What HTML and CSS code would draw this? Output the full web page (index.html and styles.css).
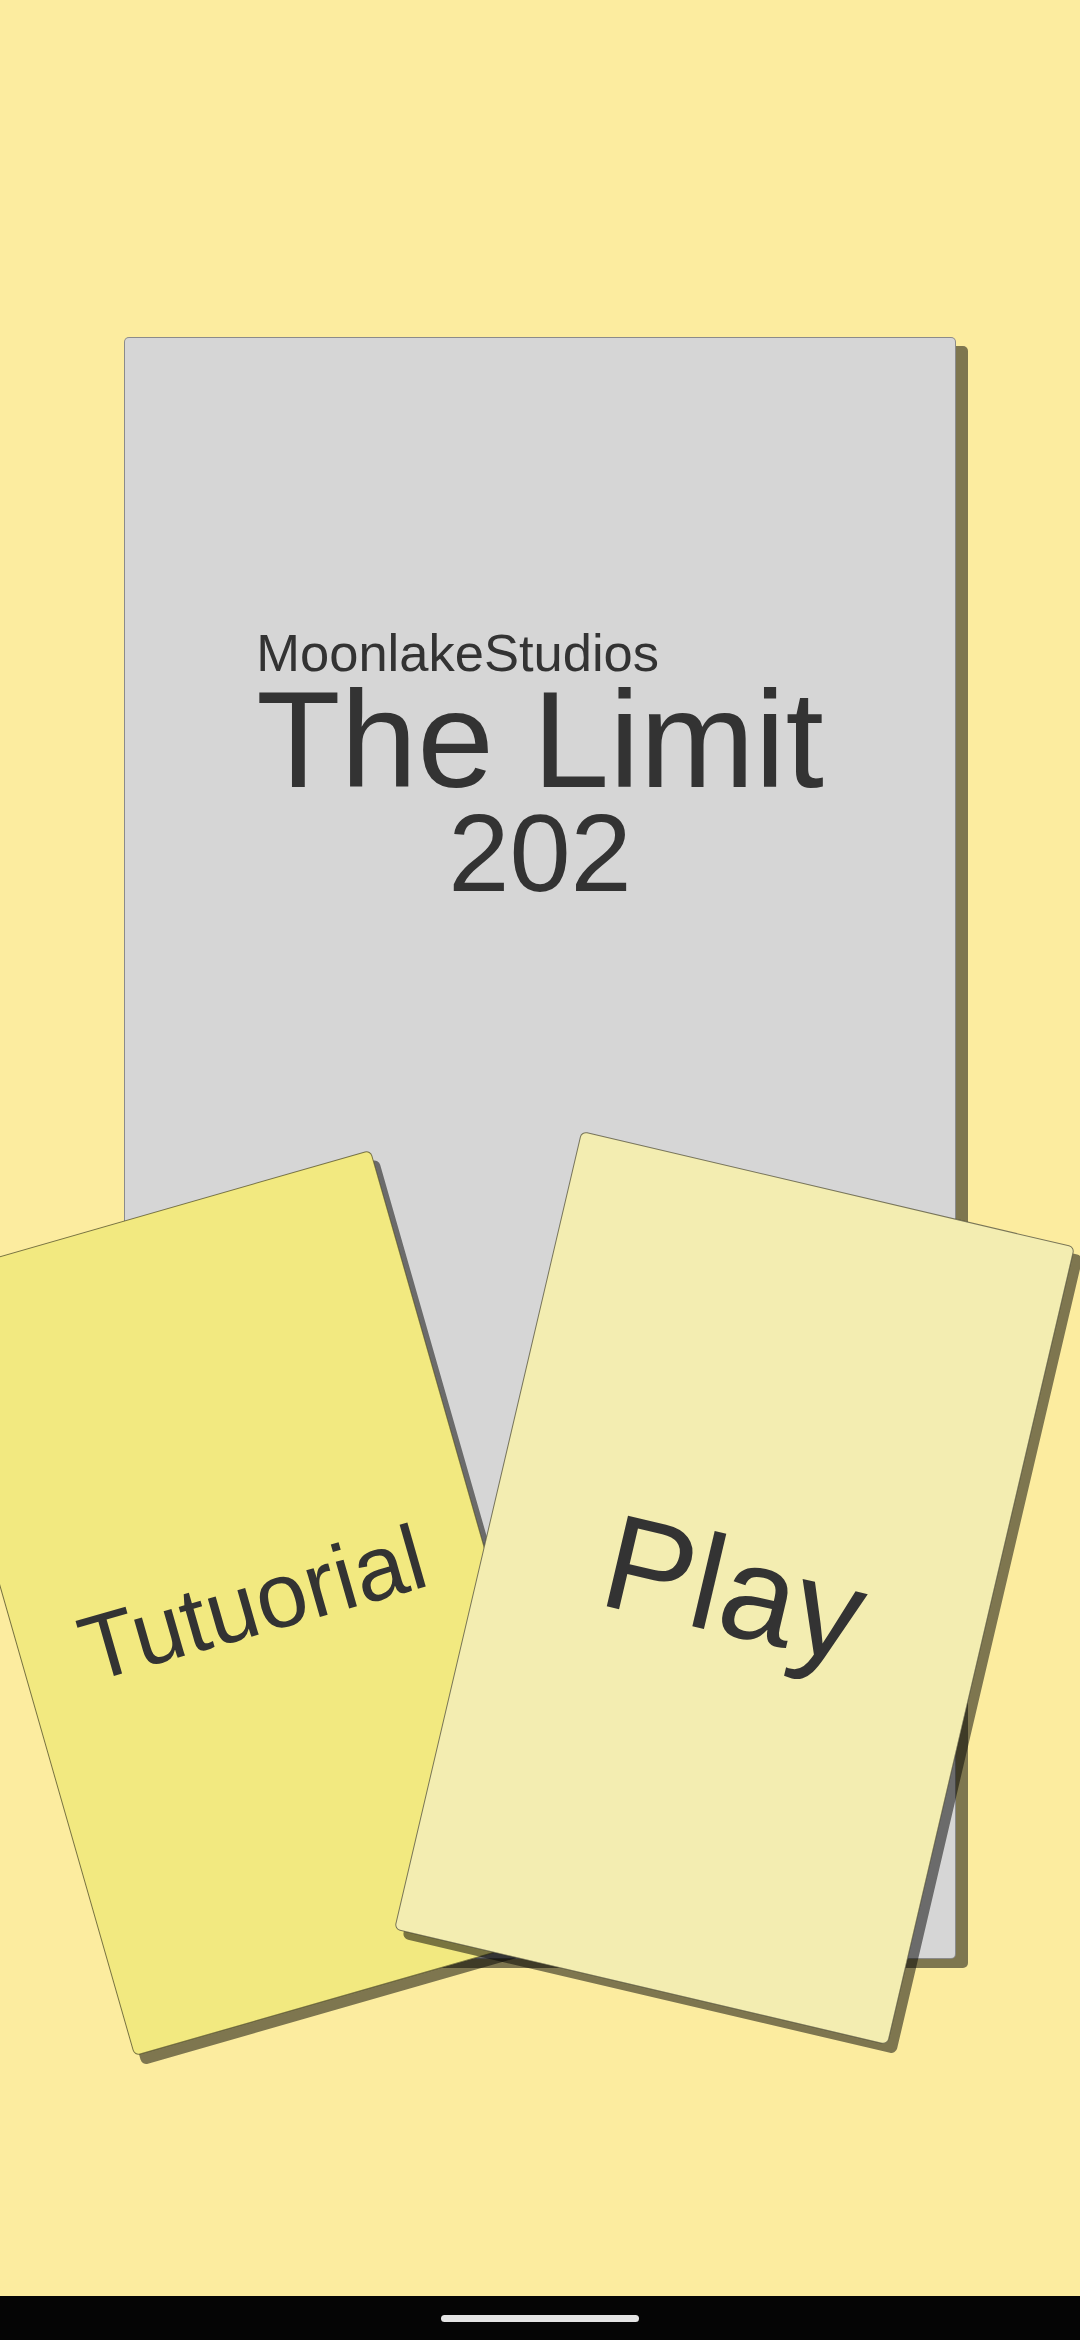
FILE: index.html
```html
<!DOCTYPE html>
<html lang="en">
<head>
<meta charset="utf-8">
<title>The Limit 202</title>
<link rel="stylesheet" href="styles.css">
</head>
<body>
<div class="screen">
  <main class="stage">
    <section class="cover">
      <div class="cover-text">
        <div class="title-block">
          <div class="studio">MoonlakeStudios</div>
          <div class="name">The Limit</div>
        </div>
        <div class="year">202</div>
      </div>
    </section>
    <button class="card card-tutorial" type="button"><span class="card-label tutorial-label">Tutuorial</span></button>
    <button class="card card-play" type="button"><span class="card-label play-label">Play</span></button>
  </main>
  <nav class="navbar"><span class="pill"></span></nav>
</div>
</body>
</html>
```

FILE: styles.css
```css
* { box-sizing: border-box; }
html, body {
  margin: 0;
  padding: 0;
  width: 1080px;
  height: 2340px;
  overflow: hidden;
  background: #fcec9f;
  font-family: "Liberation Sans", Arial, sans-serif;
  color: #333333;
}
.screen {
  width: 1080px;
  height: 2340px;
  display: flex;
  flex-direction: column;
}
.stage {
  position: relative;
  flex: 1;
  display: flex;
  flex-direction: column;
  align-items: center;
  padding-top: 337px;
}
.cover {
  width: 832px;
  height: 1622px;
  background: #d6d6d6;
  border: 1px solid rgba(0, 0, 0, 0.35);
  border-radius: 5px;
  box-shadow: 12px 9px 0 rgba(0, 0, 0, 0.5);
  padding-top: 289px;
}
.cover-text {
  display: flex;
  flex-direction: column;
  align-items: center;
}
.title-block {
  display: flex;
  flex-direction: column;
  align-items: flex-start;
}
.studio {
  font-size: 52.5px;
  line-height: 52px;
  white-space: nowrap;
}
.name {
  font-size: 138px;
  line-height: 121px;
  white-space: nowrap;
}
.year {
  font-size: 110px;
  line-height: 105px;
}
.card {
  position: absolute;
  display: flex;
  align-items: center;
  justify-content: center;
  margin: 0;
  padding: 0;
  border: 1px solid rgba(0, 0, 0, 0.5);
  border-radius: 6px;
  font-family: "Liberation Sans", Arial, sans-serif;
  color: #333333;
  cursor: pointer;
}
.card-tutorial {
  left: 14px;
  top: 1200px;
  width: 477px;
  height: 806px;
  background: #f2e980;
  transform: rotate(-16deg);
  box-shadow: 5px 11px 0 rgba(0, 0, 0, 0.5);
}
.card-play {
  left: 481px;
  top: 1178px;
  width: 507px;
  height: 820px;
  background: #f3edb1;
  transform: rotate(13.2deg);
  box-shadow: 10px 7px 0 rgba(0, 0, 0, 0.5);
}
.card-label {
  white-space: nowrap;
  line-height: 1;
}
.tutorial-label { font-size: 92px; }
.play-label { font-size: 135px; }
.navbar {
  height: 44px;
  background: #050505;
  display: flex;
  align-items: center;
  justify-content: center;
}
.pill {
  width: 198px;
  height: 7px;
  border-radius: 4px;
  background: #e4e4e4;
}
```
